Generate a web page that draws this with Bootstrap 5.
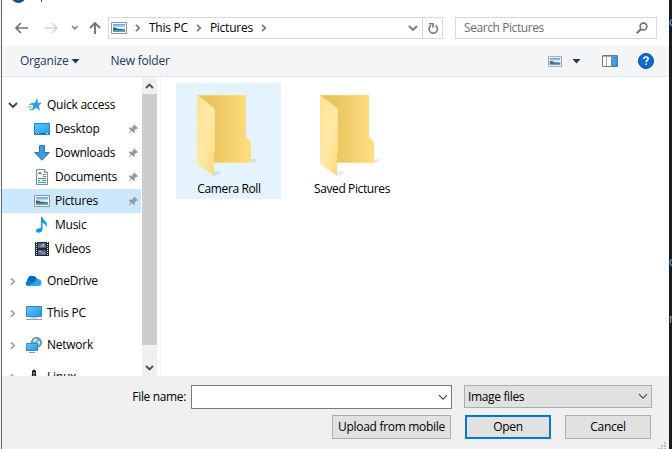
<!DOCTYPE html>
<html lang="en">
<head>
<meta charset="utf-8">
<meta name="viewport" content="width=device-width, initial-scale=1">
<title>Open</title>
<link href="https://cdn.jsdelivr.net/npm/bootstrap@5.3.0/dist/css/bootstrap.min.css" rel="stylesheet">
<style>
body{font:12px/16px "Open Sans","Noto Sans",sans-serif;letter-spacing:-.25px;color:#000;background:#1c1c1c;width:672px;height:449px;overflow:hidden}
svg{display:block;flex:none}
.dialog{width:668px;height:449px;border-left:1px solid #64676b;background:#fff}
.desk-left{width:1px;background:#f3f3f3}
.titlebar{height:17px}
.addr-row{height:29px;padding-left:13px}
.addr{width:335px;height:22px;border:1px solid #d9d9d9;padding-left:2px}
.chev{margin:0 8px;color:#777}
.refresh{width:20px;border-left:1px solid #d9d9d9}
.search{width:202px;height:22px;border:1px solid #d9d9d9;margin-left:12px;color:#6d6d6d;letter-spacing:-.42px}
.toolbar{height:31px;background:#f4f5f7;border-bottom:1px solid #e5e5e5;color:#1e395b}
.toolbar span{letter-spacing:-.22px}
.main-area{height:299px}
.tree{width:140px;padding-top:16px;overflow:hidden}
.tree-row{height:24px;width:139px}
.tree-row.child{padding-left:32px}
.tree-row.child span{margin-left:5px}
.tree-row.chosen{background:#cce8ff}
.group-row{margin-top:8px}
.group-row span:last-child{margin-left:4px}
.pinned{margin:0 2px 0 auto}
.twisty{width:22px;padding-left:6px}
.scroller{width:15px;background:#f0f0f0}
.thumb{height:251px;background:#cdcdcd}
.divide{width:1px;margin-left:3px;background:#f0f0f0}
.files{padding:6px 0 0 15px;gap:18px}
.tile{width:105px;height:116px;padding-top:10px}
.tile.hot{background:#e5f3ff}
.tile svg{margin:0 2px 4px 0}
.tile-name{padding-left:1px;letter-spacing:-.38px}
.foot{height:73px;background:#f0f0f0;padding-top:9px}
.name-label{width:189px;padding-right:5px;letter-spacing:-.35px}
.name-box{width:261px;height:24px;border:1px solid #7a7a7a;background:#fff;padding-right:3px}
.type-box{width:188px;height:23px;border:1px solid #adadad;background:#e1e1e1;margin-left:12px;padding:0 3px}
.type-box span{letter-spacing:-.35px}
.push{height:24px;border:1px solid #adadad;background:#e1e1e1;padding:0;font:inherit;letter-spacing:-.3px;color:#000}
.push.main{border:2px solid #0078d7}
.grip{right:3px;bottom:0}
.behind{width:3px;overflow:hidden;color:#6ab7f5;background:#1c1c1c}
.behind span{left:0}
</style>
<script src="https://cdn.jsdelivr.net/npm/bootstrap@5.3.0/dist/js/bootstrap.bundle.min.js"></script>
</head>
<body class="d-flex">
<svg width="0" height="0" class="position-absolute" aria-hidden="true">
<defs>
<linearGradient id="sky" x2="0" y2="1"><stop stop-color="#5c9ae8"/><stop offset=".5" stop-color="#eaf7fd"/><stop offset=".7" stop-color="#a9d3e4"/><stop offset="1" stop-color="#4e93bd"/></linearGradient>
<linearGradient id="blue" x2="1" y2="1"><stop stop-color="#63c8ff"/><stop offset="1" stop-color="#199af0"/></linearGradient>
<linearGradient id="back"><stop offset=".25" stop-color="#e9c35d"/><stop offset="1" stop-color="#ffdf82"/></linearGradient>
<linearGradient id="front" x2="1" y2="1"><stop stop-color="#ffe28e"/><stop offset=".5" stop-color="#ffe9a8"/><stop offset="1" stop-color="#fcd978"/></linearGradient>
<symbol id="photo" viewBox="0 0 16 12"><path d="M.5.5h15v11H.5z" fill="#fff" stroke="#8d9499"/><path d="M2 2h12v8H2z" fill="url(#sky)"/><path d="M2 5.500q3 0 5 1.300l7 .7v1H2z" fill="#356862"/></symbol>
<symbol id="right" viewBox="0 0 6 8"><path d="M1 .8 4.300 4 1 7.200" fill="none" stroke="currentColor" stroke-width="1.7"/></symbol>
<symbol id="down" viewBox="0 0 10 7"><path d="m1 1 4 4 4-4" fill="none" stroke="currentColor" stroke-width="1.9"/></symbol>
<symbol id="thin" viewBox="0 0 10 7"><path d="m1 1.200 4 4 4-4" fill="none" stroke="#444" stroke-width="1.100"/></symbol>
<symbol id="pin" viewBox="0 0 12 12"><path d="m6.800 1 4 4-.8.9-.8-.3-2 2 .1 2.200-.8.800-2.400-2.400L.5 11.500l2.400-4.100L.9 5.200l.8-.8 2.400.2 2-2-.2-.8z" fill="#929ca5"/></symbol>
<symbol id="folder" viewBox="0 0 62 84"><path d="M54 65l6 .3q1 2-6 3.700z" fill="#777" opacity=".16"/><path d="M17 77l7 .5q0 2.500-7 4.500z" fill="#777" opacity=".16"/><path d="M0 1h49v42l5 5v21H17z" fill="url(#back)"/><path d="m0 1 17 13 1 2v42l-1 2v22L0 70z" fill="url(#front)"/><path d="M0 1.200h49M17 68.700h37" stroke="#ffe79b" stroke-width=".6"/></symbol>
</defs>
</svg>
<div class="desk-left"></div>
<main class="dialog d-flex flex-column position-relative">
<header class="titlebar d-flex align-items-start overflow-hidden">
<svg width="50" height="4"><circle cx="16.500" cy="-4" r="7" fill="#0b67b6"/><path d="M11-1q5 5 11 0" fill="none" stroke="#124b86" stroke-width="2"/><path d="M39.500 0v2" stroke="#444"/></svg>
</header>
<div class="addr-row d-flex align-items-start">
<div class="d-flex pt-1">
<svg width="93" height="16" fill="none" stroke="#737373" stroke-width="1.6"><path d="M13 7H1M6 2 1 7l5 5"/><path d="M30 7h12M37 2l5 5-5 5" stroke="#d5d5d5"/><path d="m57 5 2.800 2.800L62.600 5" stroke="#8a8a8a" stroke-width="1.7"/><path d="M80 13V2M75 7l5-5 5 5" stroke-width="1.9"/></svg>
</div>
<div class="addr d-flex align-items-center">
<svg width="16" height="12"><use href="#photo"/></svg>
<svg width="6" height="8" class="chev"><use href="#right"/></svg>
<span>This PC</span>
<svg width="6" height="8" class="chev"><use href="#right"/></svg>
<span>Pictures</span>
<svg width="6" height="8" class="chev"><use href="#right"/></svg>
<svg width="10" height="7" color="#777" class="ms-auto me-1"><use href="#down"/></svg>
<span class="refresh h-100 d-flex align-items-center justify-content-center"><svg width="12" height="13" fill="none" stroke="#777" stroke-width="1.6"><path d="M8.500 3.400A4.200 4.200 0 1 1 4 3.400"/><path d="M2 1.800h4v4"/></svg></span>
</div>
<div class="search d-flex align-items-center justify-content-between px-2"><span>Search Pictures</span><svg width="12" height="12" fill="none" stroke="#737373" stroke-width="1.6"><circle cx="7.500" cy="4.500" r="3.400"/><path d="M5 7 .8 11.200" stroke-width="2"/></svg></div>
</div>
<div class="toolbar d-flex align-items-center">
<span style="margin-left:18px">Organize</span><svg style="margin-left:3px" width="10" height="5"><path d="M.5 0h8L4.500 4.500z" fill="#1e395b"/></svg>
<span style="margin-left:29px">New folder</span>
<svg class="ms-auto" width="14" height="11"><use href="#photo"/></svg>
<svg style="margin-left:10px" width="9" height="5"><path d="M.5 0h8l-4 4.500z" fill="#1e395b"/></svg>
<svg style="margin-left:21px" width="16" height="12"><path d="M.5.5h15v11H.5z" fill="#fff" stroke="#777c82"/><path d="M1 1.500h14M4.500 1v10" stroke="#a6a9ad"/><path d="M9.500 2h5.500v9H9.500z" fill="#43a0e7" stroke="#247dc2" stroke-width=".7"/></svg>
<svg style="margin:0 15px 0 20px" width="16" height="16"><circle cx="8" cy="8" r="7.500" fill="#0b6bd0" stroke="#124b91"/><path d="M5.700 6q.2-2 2.300-2 2.200 0 2.200 1.800 0 1-1.200 1.700-.9.600-.9 1.700M8.100 10.500v1.600" fill="none" stroke="#fff" stroke-width="1.6"/></svg>
</div>
<section class="main-area d-flex">
<nav class="tree">
<div class="tree-row d-flex align-items-center"><span class="twisty"><svg width="10" height="7" color="#444"><use href="#down"/></svg></span><svg width="20" height="14" style="margin-left:2px"><path d="m11 0 1 4.800h4l-3.200 2.900 1.200 5.300-4-3.200L5.500 13l1.800-5-3-2.800 4.500-.4z" fill="#2d9fe8"/><path d="M3 6.500h3M2 9h4M3 11.500h3" stroke="#5cb2e9"/></svg><span style="margin-left:1px">Quick access</span></div>
<div class="tree-row child d-flex align-items-center"><svg width="16" height="12"><path d="M.5.5h15v11H.5z" fill="url(#blue)" stroke="#1489d0"/><path d="M1 10.500h14" stroke="#1265a1"/><path d="M2 10.500h1m1 0h1m7 0h2" stroke="#fff"/></svg><span>Desktop</span><svg class="pinned" width="11" height="12"><use href="#pin"/></svg></div>
<div class="tree-row child d-flex align-items-center"><svg width="16" height="16"><path d="M5.500.5h5v7h4.800L8 15.300.7 7.500h4.800z" fill="#3f97e6" stroke="#2376bf"/></svg><span>Downloads</span><svg class="pinned" width="11" height="12"><use href="#pin"/></svg></div>
<div class="tree-row child d-flex align-items-center"><svg width="16" height="16"><path d="M2.500.5h8l3 3v12h-11z" fill="#fff" stroke="#86898c"/><path d="M10.500.5v3h3" fill="#eee" stroke="#86898c"/><path d="M4 5.500 6 3l1.500 2.500M4.500 4.500H7M9 5.500h3M9 7.500h3M4 9.500h8M4 11.500h2m2 0h4M4 13.500h8" stroke="#3a8fc6" fill="none"/></svg><span>Documents</span><svg class="pinned" width="11" height="12"><use href="#pin"/></svg></div>
<div class="tree-row child chosen d-flex align-items-center"><svg width="16" height="12"><use href="#photo"/></svg><span>Pictures</span><svg class="pinned" width="11" height="12"><use href="#pin"/></svg></div>
<div class="tree-row child d-flex align-items-center"><svg width="16" height="16"><path d="M7 0h1.500q.3 2.300 2.800 4.200 2.700 2.200.8 6-.1-3.300-3.600-4.400v6.700q-.3 2.700-3.600 3.300-3 .2-2.900-2.200.5-2.500 5-2.700z" fill="#1496ea"/></svg><span>Music</span></div>
<div class="tree-row child d-flex align-items-center"><svg width="16" height="16"><path d="M1 1h14v14H1z" fill="#26272b"/><path d="M2.500 1v14M13.500 1v14" stroke="#e1e1e1" stroke-dasharray="1 1"/><path d="M4 2h8v5H4zM4 9h8v5H4z" fill="#3c67bd"/><path d="m5 6 2-2 1 1 2-1 1 2zM5 10h2l2 2 2-1v2H8z" fill="#db853b"/><path d="M8 3h2v1.500H8M5 10h2v1H5" fill="#dfd84d"/></svg><span>Videos</span></div>
<div class="tree-row group-row d-flex align-items-center"><span class="twisty ps-2"><svg width="6" height="9" color="#a1a1a1"><use href="#right"/></svg></span><svg width="18" height="12" style="margin-left:1px"><path d="M2 6Q3 0 8 1q3 0 4 3l4 2-5 5H4q-4-1-2-5z" fill="#0867bd"/><path d="M1 7q2-2 5-1l6 5H4q-4 0-3-4z" fill="#087bd4"/><path d="M6 9q5-3 6-5 4 0 4 2 2 5-3 5H4z" fill="#2ba4ed"/></svg><span>OneDrive</span></div>
<div class="tree-row group-row d-flex align-items-center"><span class="twisty ps-2"><svg width="6" height="9" color="#a1a1a1"><use href="#right"/></svg></span><svg width="18" height="16" style="margin-left:1px"><path d="M1.500 1.500h15v10h-15z" fill="url(#blue)" stroke="#477f9f"/><path d="M6 13h6M1 14.500h16" stroke="#91a7b8"/></svg><span>This PC</span></div>
<div class="tree-row group-row d-flex align-items-center"><span class="twisty ps-2"><svg width="6" height="9" color="#a1a1a1"><use href="#right"/></svg></span><svg width="18" height="16" style="margin-left:1px"><circle cx="11.500" cy="5.500" r="5" fill="#78adc8" stroke="#467f9e"/><path d="m8 3 3-2 1 3-3 1zM12 5l3-1v4" fill="#cbe8ef"/><path d="M1.500 6.500h11v7h-11z" fill="url(#blue)" stroke="#3b88b3"/><path d="M4 15.500h6" stroke="#829bab"/></svg><span>Network</span></div>
<div class="tree-row group-row d-flex align-items-center"><span class="twisty ps-2"><svg width="6" height="9" color="#a1a1a1"><use href="#right"/></svg></span><svg width="18" height="16" style="margin-left:1px"><path d="M7 2q2-3 4 0v4l3 6-2 3H6l-2-3 3-6z" fill="#222"/><path d="M9 6q3 4 1 8H8q-2-4 1-8" fill="#fff"/><path d="M8 4h2l-1 1zM4 13l3 2M14 13l-3 2" fill="#e4a43b" stroke="#e4a43b"/></svg><span>Linux</span></div>
</nav>
<div class="scroller d-flex flex-column align-items-center"><svg width="15" height="17" fill="none" stroke="#505050" stroke-width="1.9"><path d="m4 11 3.500-3.500L11 11"/></svg><div class="thumb w-100"></div><svg class="mt-auto" width="15" height="17" fill="none" stroke="#505050" stroke-width="1.9"><path d="m4 7 3.500 3.500L11 7"/></svg></div>
<div class="divide"></div>
<div class="files d-flex align-items-start">
<div class="tile hot d-flex flex-column align-items-center"><svg width="62" height="84"><use href="#folder" y="1"/></svg><span class="tile-name">Camera Roll</span></div>
<div class="tile d-flex flex-column align-items-center"><svg width="62" height="84"><use href="#folder" y="1"/></svg><span class="tile-name">Saved Pictures</span></div>
</div>
</section>
<footer class="foot">
<div class="d-flex">
<label class="name-label text-end pt-1" for="filename">File name:</label>
<div id="filename" class="name-box d-flex align-items-center justify-content-end"><svg width="10" height="7"><use href="#thin"/></svg></div>
<div class="type-box d-flex align-items-center justify-content-between"><span>Image files</span><svg width="10" height="7"><use href="#thin"/></svg></div>
</div>
<div class="d-flex" style="padding:6px 0 0 330px">
<button class="push" style="width:119px">Upload from mobile</button>
<button class="push main" style="width:86px;margin-left:14px">Open</button>
<button class="push" style="width:86px;margin-left:14px">Cancel</button>
</div>
</footer>
<svg class="grip position-absolute" width="8" height="7" fill="#bdbdbd"><path d="M6 0h2v2H6zM3 3h2v2H3zM6 3h2v2H6zM0 6h2v1H0zM3 6h2v1H3zM6 6h2v1H6z"/></svg>
</main>
<aside class="behind position-relative"><span class="position-absolute" style="top:14px">c</span><span class="position-absolute" style="top:254px">o</span><span class="position-absolute" style="top:311px">n</span></aside>
</body>
</html>
